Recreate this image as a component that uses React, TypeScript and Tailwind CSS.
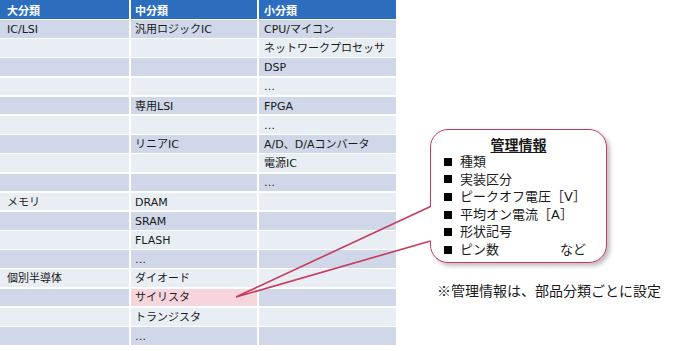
import React from "react";

const rows: [string, string, string][] = [
  ["IC/LSI", "汎用ロジックIC", "CPU/マイコン"],
  ["", "", "ネットワークプロセッサ"],
  ["", "", "DSP"],
  ["", "", "…"],
  ["", "専用LSI", "FPGA"],
  ["", "", "…"],
  ["", "リニアIC", "A/D、D/Aコンバータ"],
  ["", "", "電源IC"],
  ["", "", "…"],
  ["メモリ", "DRAM", ""],
  ["", "SRAM", ""],
  ["", "FLASH", ""],
  ["", "…", ""],
  ["個別半導体", "ダイオード", ""],
  ["", "サイリスタ", ""],
  ["", "トランジスタ", ""],
  ["", "…", ""],
];

const items = ["種類", "実装区分", "ピークオフ電圧［V］", "平均オン電流［A］", "形状記号"];

export default function App() {
  return (
    <div className="relative flex w-[700px] h-[351px] overflow-hidden bg-white font-['DejaVu_Sans','Noto_Sans_CJK_JP',sans-serif] text-[#1a1a1a]">
      {/* Table */}
      <div className="flex w-[396px] flex-col gap-y-[1.5px]">
        <div className="flex h-[18.5px] gap-x-[2px] text-[11px] font-bold text-white">
          <div className="flex w-[129px] items-center bg-[#2c6ebd] pl-[7px] pt-[1px] font-['Noto_Sans_CJK_JP',sans-serif]">大分類</div>
          <div className="flex w-[126px] items-center bg-[#2c6ebd] pl-[4px] pt-[1px] font-['Noto_Sans_CJK_JP',sans-serif]">中分類</div>
          <div className="flex flex-1 items-center bg-[#2c6ebd] pl-[5px] pt-[1px] font-['Noto_Sans_CJK_JP',sans-serif]">小分類</div>
        </div>
        {rows.map((r, i) => {
          const bg = i % 2 === 0 ? "bg-[#cfd7e8]" : "bg-[#e9edf4]";
          const hl = i === 14;
          return (
            <div key={i} className="flex h-[17.7px] gap-x-[2px] text-[11px] leading-none">
              <div className={`flex w-[129px] items-center pl-[7px] pt-[1px] ${bg}`}>{r[0]}</div>
              <div className={`flex w-[126px] items-center pl-[4px] pt-[1px] ${hl ? "bg-[#f6d5dd]" : bg}`}>{r[1]}</div>
              <div className={`flex flex-1 items-center pl-[5px] pt-[1px] ${bg}`}>{r[2]}</div>
            </div>
          );
        })}
      </div>

      {/* Right side: callout + note */}
      <div className="flex flex-col pl-[34px] pt-[129px]">
        <div className="relative h-[134px] w-[177px] rounded-[18px] border-[1.5px] border-[#c83a5c] bg-white pt-[5px] shadow-[3px_3px_4px_rgba(0,0,0,0.25)]">
          <div className="absolute left-[-2px] top-[76.5px] h-[34px] w-[3px] bg-white" />
          <div className="text-center text-[14px] font-bold leading-[18px] underline underline-offset-[2px] font-['Noto_Sans_CJK_JP',sans-serif]">
            管理情報
          </div>
          <div className="flex flex-col pl-[13px] text-[13px] leading-[17.6px]">
            {items.map((t) => (
              <div key={t} className="flex items-center">
                <span className="mr-[8px] inline-block h-[8px] w-[8px] bg-black" />
                <span>{t}</span>
              </div>
            ))}
            <div className="flex items-center">
              <span className="mr-[8px] inline-block h-[8px] w-[8px] bg-black" />
              <span>ピン数</span>
              <span className="ml-auto mr-[20px]">など</span>
            </div>
          </div>
        </div>
        <div className="ml-[7px] mt-[17px] whitespace-nowrap text-[14px] leading-[20px] font-['Noto_Sans_CJK_JP',sans-serif]">
          ※管理情報は、部品分類ごとに設定
        </div>
      </div>

      {/* Callout tail */}
      <svg
        className="pointer-events-none absolute left-0 top-0"
        width="700"
        height="351"
        viewBox="0 0 700 351"
      >
        <path
          d="M430.5 206.5 L236 297 L430.5 241"
          fill="none"
          stroke="#c83a5c"
          strokeWidth="1.6"
          strokeLinejoin="miter"
        />
      </svg>
    </div>
  );
}
